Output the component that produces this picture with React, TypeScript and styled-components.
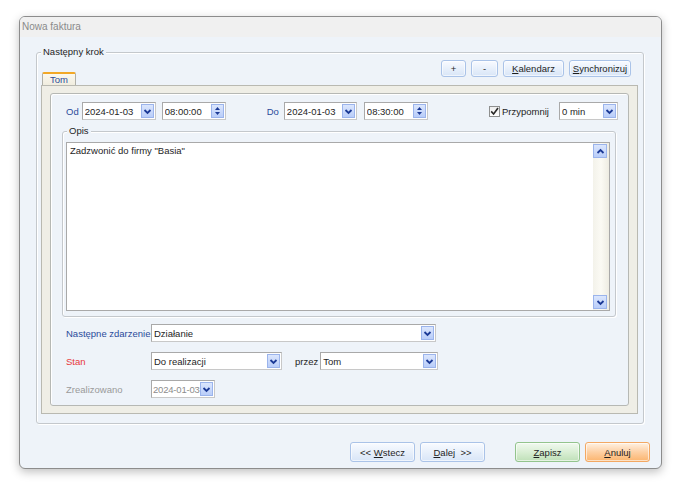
import React from 'react';
import styled, { createGlobalStyle, css } from 'styled-components';

const GlobalStyle = createGlobalStyle`
  html, body {
    margin: 0;
    padding: 0;
    background: #ffffff;
  }
  body {
    font-family: "Liberation Sans", Arial, sans-serif;
    font-size: 9.5px;
    color: #1e1e1e;
  }
`;

const Page = styled.div`
  width: 680px;
  height: 491px;
  padding: 16px 0 0 19px;
  box-sizing: border-box;
`;

const Window = styled.div`
  width: 643px;
  height: 453px;
  box-sizing: border-box;
  border: 1px solid #8c8c8c;
  border-radius: 6px;
  background: #eef3f9;
  box-shadow: 0 3px 10px rgba(0, 0, 0, 0.25);
  overflow: hidden;
  display: flex;
  flex-direction: column;
`;

const TitleBar = styled.div`
  height: 20px;
  line-height: 20px;
  padding-left: 2px;
  background: #f0f0f0;
  color: #8a8a8a;
  font-size: 10px;
`;

const Body = styled.div`
  flex: 1;
  display: flex;
  flex-direction: column;
  padding: 15px 11px 6px 16px;
`;

const GroupBox = styled.div<{ $w: number; $h: number }>`
  position: relative;
  width: ${({ $w }) => $w}px;
  height: ${({ $h }) => $h}px;
  box-sizing: border-box;
  border: 1px solid #c4c8cc;
  border-radius: 3px;
  box-shadow: inset 1px 1px 0 #ffffff, 1px 1px 0 #ffffff;
`;

const Caption = styled.span`
  position: absolute;
  top: -7px;
  left: 4px;
  padding: 0 2px;
  background: #eef3f9;
  line-height: 12px;
  color: #1e1e1e;
`;

const StepGroup = styled(GroupBox)`
  padding: 7px 5px 9px 4px;
  display: flex;
  flex-direction: column;
`;

const HeaderRow = styled.div`
  height: 25px;
  display: flex;
  justify-content: space-between;
`;

const Tab = styled.div`
  align-self: flex-end;
  margin-left: 1px;
  width: 34px;
  height: 13px;
  box-sizing: border-box;
  border: 1px solid #b0b0a8;
  border-bottom: none;
  border-top: 2px solid #f2a827;
  border-radius: 2px 2px 0 0;
  background: linear-gradient(#fbf8ee, #f0eddf);
  color: #2b4b9b;
  text-align: center;
  line-height: 11px;
`;

const Toolbar = styled.div`
  display: flex;
  gap: 5px;
  margin-right: 7px;
  align-self: flex-start;
`;

const Btn = styled.button<{ $w: number; $h?: number; $tone?: 'blue' | 'green' | 'orange' }>`
  width: ${({ $w }) => $w}px;
  height: ${({ $h }) => $h ?? 17}px;
  padding: 0;
  font-family: inherit;
  font-size: 9.5px;
  color: #1e1e1e;
  border-radius: 3px;
  white-space: pre;
  ${({ $tone }) =>
    $tone === 'green'
      ? css`
          border: 1px solid #93c48d;
          background: linear-gradient(#f1f9ef, #d9eed4 50%, #bfe0b8);
        `
      : $tone === 'orange'
      ? css`
          border: 1px solid #f3a863;
          background: linear-gradient(#fff1e2, #fdd0a4 50%, #fbb56f);
        `
      : css`
          border: 1px solid #aac3e8;
          background: linear-gradient(#f9fbff, #e8f0fb 50%, #d8e5f7);
        `}
  box-shadow: inset 0 0 0 1px rgba(255, 255, 255, 0.6);
  u {
    text-decoration: underline;
  }
`;

const TabPanel = styled.div`
  width: 597px;
  flex: 1;
  box-sizing: border-box;
  border: 1px solid #b9b9b1;
  background: #efeee6;
  padding: 7px 8px 7px 8px;
  display: flex;
`;

const InnerPanel = styled.div`
  flex: 1;
  box-sizing: border-box;
  border: 1px solid #b6b8b4;
  border-radius: 3px;
  background: #eef3f9;
  box-shadow: inset 1px 1px 0 #ffffff;
  padding: 8px 10px 0 15px;
  display: flex;
  flex-direction: column;
`;

const TopRow = styled.div`
  display: flex;
  align-items: center;
  height: 18px;
`;

const Label = styled.span<{ $color?: string; $ml?: number }>`
  color: ${({ $color }) => $color ?? '#1e1e1e'};
  margin-left: ${({ $ml }) => $ml ?? 0}px;
  white-space: nowrap;
`;

const Field = styled.div<{ $w: number; $ml?: number; $disabled?: boolean }>`
  width: ${({ $w }) => $w}px;
  height: 18px;
  margin-left: ${({ $ml }) => $ml ?? 0}px;
  box-sizing: border-box;
  border: 1px solid #a9a9a9;
  border-right-color: #c8c8c8;
  border-bottom-color: #c8c8c8;
  background: #ffffff;
  display: flex;
  align-items: center;
  padding: 0 1px 0 ${({ $disabled }) => ($disabled ? 1 : 2)}px;
  color: ${({ $disabled }) => ($disabled ? '#8c8c8c' : '#1e1e1e')};
  flex-shrink: 0;
`;

const FieldText = styled.span<{ $tight?: boolean }>`
  flex: 1;
  min-width: 0;
  white-space: nowrap;
  overflow: ${({ $tight }) => ($tight ? 'visible' : 'hidden')};
  letter-spacing: ${({ $tight }) => ($tight ? '-0.2px' : '0')};
`;

const DropBtn = styled.span`
  position: relative;
  width: 13px;
  height: 14px;
  box-sizing: border-box;
  border: 1px solid #9bb4ec;
  background: linear-gradient(#dbe6fd, #b9cdf9);
  display: flex;
  align-items: center;
  justify-content: center;
  flex-shrink: 0;
`;

const Chevron = ({ up }: { up?: boolean }) => (
  <svg width="9" height="7" viewBox="0 0 9 7">
    <path
      d={up ? 'M1.5 5 L4.5 2 L7.5 5' : 'M1.5 2 L4.5 5 L7.5 2'}
      fill="none"
      stroke="#1c3a96"
      strokeWidth="1.8"
    />
  </svg>
);

const Spinner = () => (
  <svg width="7" height="10" viewBox="0 0 7 10">
    <path d="M3.5 1 L6 4 L1 4 Z" fill="#1c3a96" />
    <path d="M3.5 9 L6 6 L1 6 Z" fill="#1c3a96" />
  </svg>
);

const Combo = ({ w, ml, text, disabled }: { w: number; ml?: number; text: string; disabled?: boolean }) => (
  <Field $w={w} $ml={ml} $disabled={disabled}>
    <FieldText $tight={disabled}>{text}</FieldText>
    <DropBtn>
      <Chevron />
    </DropBtn>
  </Field>
);

const Time = ({ ml, text }: { ml?: number; text: string }) => (
  <Field $w={64} $ml={ml}>
    <FieldText>{text}</FieldText>
    <DropBtn>
      <Spinner />
    </DropBtn>
  </Field>
);

const Spacer = styled.div`
  flex: 1;
`;

const Check = styled.span`
  width: 11px;
  height: 11px;
  box-sizing: border-box;
  border: 1px solid #8e8f8f;
  background: linear-gradient(#eeeeee, #ffffff);
  display: inline-flex;
  align-items: center;
  justify-content: center;
  margin-right: 2px;
`;

const CheckWrap = styled.label`
  display: flex;
  align-items: center;
`;

const OpisGroup = styled(GroupBox)`
  margin: 11px 0 0 -4px;
  padding: 10px 5px 5px 3px;
  display: flex;
`;

const TextArea = styled.div`
  flex: 1;
  box-sizing: border-box;
  border: 1px solid #a9a9a9;
  background: #ffffff;
  display: flex;
`;

const TextContent = styled.div`
  flex: 1;
  padding: 2px 3px;
  line-height: 12px;
`;

const ScrollBar = styled.div`
  width: 15px;
  display: flex;
  flex-direction: column;
  justify-content: space-between;
  background: linear-gradient(90deg, #f3f2ea, #fbfaf4 50%, #eeece2);
  padding: 1px 1px 1px 0;
`;

const ScrollBtn = styled.span`
  width: 14px;
  height: 14px;
  box-sizing: border-box;
  border: 1px solid #9bb4ec;
  background: linear-gradient(#dbe6fd, #b9cdf9);
  display: flex;
  align-items: center;
  justify-content: center;
`;

const FormGrid = styled.div`
  display: grid;
  grid-template-columns: 85px auto;
  grid-auto-rows: 18px;
  row-gap: 10px;
  align-items: center;
  margin-top: 7px;
`;

const FieldRow = styled.div`
  display: flex;
  align-items: center;
`;

const Footer = styled.div`
  margin-top: auto;
  display: flex;
  justify-content: flex-end;
  gap: 5px;
`;

const FooterGap = styled.div`
  width: 20px;
`;

export default function App() {
  return (
    <>
      <GlobalStyle />
      <Page>
        <Window>
          <TitleBar>Nowa faktura</TitleBar>
          <Body>
            <StepGroup $w={608} $h={372}>
              <Caption>Następny krok</Caption>
              <HeaderRow>
                <Tab>Tom</Tab>
                <Toolbar>
                  <Btn $w={25}>+</Btn>
                  <Btn $w={27}>-</Btn>
                  <Btn $w={61}>
                    <u>K</u>alendarz
                  </Btn>
                  <Btn $w={62}>
                    <u>S</u>ynchronizuj
                  </Btn>
                </Toolbar>
              </HeaderRow>
              <TabPanel>
                <InnerPanel>
                  <TopRow>
                    <Label $color="#2b4b9b">Od</Label>
                    <Combo w={74} ml={3} text="2024-01-03" />
                    <Time ml={6} text="08:00:00" />
                    <Label $color="#2b4b9b" $ml={41}>Do</Label>
                    <Combo w={73} ml={5} text="2024-01-03" />
                    <Time ml={7} text="08:30:00" />
                    <Spacer />
                    <CheckWrap>
                      <Check>
                        <svg width="9" height="9" viewBox="0 0 9 9">
                          <path d="M1.2 4.4 L3.6 7 L8 1" fill="none" stroke="#2a2a2a" strokeWidth="1.6" />
                        </svg>
                      </Check>
                      Przypomnij
                    </CheckWrap>
                    <Combo w={59} ml={10} text="0 min" />
                  </TopRow>

                  <OpisGroup $w={554} $h={186}>
                    <Caption>Opis</Caption>
                    <TextArea>
                      <TextContent>Zadzwonić do firmy "Basia"</TextContent>
                      <ScrollBar>
                        <ScrollBtn>
                          <Chevron up />
                        </ScrollBtn>
                        <ScrollBtn>
                          <Chevron />
                        </ScrollBtn>
                      </ScrollBar>
                    </TextArea>
                  </OpisGroup>

                  <FormGrid>
                    <Label $color="#2b4b9b">Następne zdarzenie</Label>
                    <Combo w={285} text="Działanie" />

                    <Label $color="#e8383a">Stan</Label>
                    <FieldRow>
                      <Combo w={131} text="Do realizacji" />
                      <Label $ml={13}>przez</Label>
                      <Combo w={118} ml={2} text="Tom" />
                    </FieldRow>

                    <Label $color="#9a9a9a">Zrealizowano</Label>
                    <Combo w={64} text="2024-01-03" disabled />
                  </FormGrid>
                </InnerPanel>
              </TabPanel>
            </StepGroup>

            <Footer>
              <Btn $w={65} $h={20}>
                {'<< '}
                <u>W</u>stecz
              </Btn>
              <Btn $w={65} $h={20}>
                <u>D</u>alej{'  >>'}
              </Btn>
              <FooterGap />
              <Btn $w={65} $h={20} $tone="green">
                <u>Z</u>apisz
              </Btn>
              <Btn $w={65} $h={20} $tone="orange">
                <u>A</u>nuluj
              </Btn>
            </Footer>
          </Body>
        </Window>
      </Page>
    </>
  );
}
